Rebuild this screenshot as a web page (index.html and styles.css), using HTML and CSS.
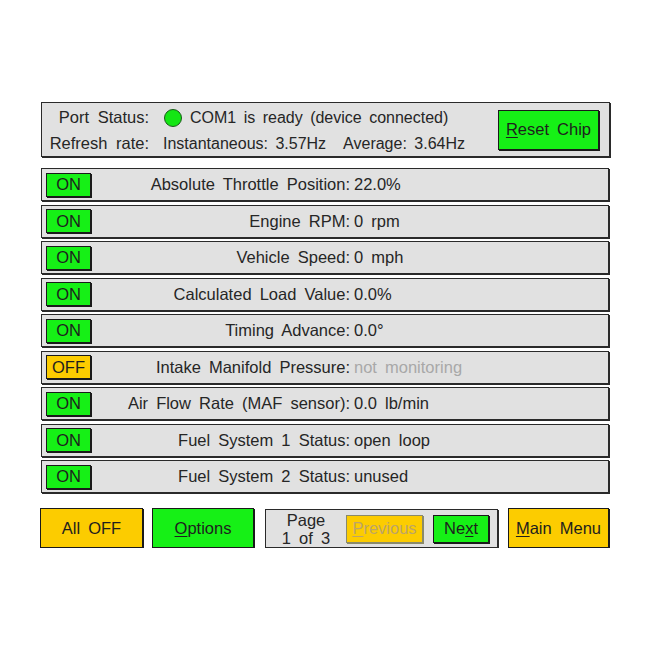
FILE: index.html
```html
<!DOCTYPE html>
<html>
<head>
<meta charset="utf-8">
<link rel="stylesheet" href="styles.css">
</head>
<body>
<div class="app">
  <div class="header panel">
    <div class="hinfo">
      <div class="hline">
        <span class="hlabel">Port Status:</span>
        <span class="led"></span>
        <span class="htext">COM1 is ready (device connected)</span>
      </div>
      <div class="hline">
        <span class="hlabel">Refresh rate:</span>
        <span class="htext inst">Instantaneous: 3.57Hz</span>
        <span class="htext avg">Average: 3.64Hz</span>
      </div>
    </div>
    <div class="btn green reset"><span class="u">R</span>eset Chip</div>
  </div>

  <div class="rows">
    <div class="row panel"><div class="tog green">ON</div><span class="label">Absolute Throttle Position:</span><span class="value">22.0%</span></div>
    <div class="row panel"><div class="tog green">ON</div><span class="label">Engine RPM:</span><span class="value">0 rpm</span></div>
    <div class="row panel"><div class="tog green">ON</div><span class="label">Vehicle Speed:</span><span class="value">0 mph</span></div>
    <div class="row panel"><div class="tog green">ON</div><span class="label">Calculated Load Value:</span><span class="value">0.0%</span></div>
    <div class="row panel"><div class="tog green">ON</div><span class="label">Timing Advance:</span><span class="value">0.0°</span></div>
    <div class="row panel"><div class="tog yellow">OFF</div><span class="label">Intake Manifold Pressure:</span><span class="value dim">not monitoring</span></div>
    <div class="row panel"><div class="tog green">ON</div><span class="label">Air Flow Rate (MAF sensor):</span><span class="value">0.0 lb/min</span></div>
    <div class="row panel"><div class="tog green">ON</div><span class="label">Fuel System 1 Status:</span><span class="value">open loop</span></div>
    <div class="row panel"><div class="tog green">ON</div><span class="label">Fuel System 2 Status:</span><span class="value">unused</span></div>
  </div>

  <div class="footer">
    <div class="btn yellow big alloff">All OFF</div>
    <div class="btn green big options"><span class="u">O</span>ptions</div>
    <div class="pager panel">
      <div class="pagetext">Page<br>1 of 3</div>
      <div class="btn yellow disabled prev"><span class="u">P</span>revious</div>
      <div class="btn green next">Ne<span class="u">x</span>t</div>
    </div>
    <div class="btn yellow big mainmenu"><span class="u">M</span>ain Menu</div>
  </div>
</div>
</body>
</html>
```

FILE: styles.css
```css
html, body {
  margin: 0;
  padding: 0;
  background: #ffffff;
}

body {
  font-family: "Liberation Sans", Arial, sans-serif;
  font-size: 16.5px;
  color: #262626;
  word-spacing: 3.5px;
}

.app {
  width: 570px;
  margin-left: 40px;
  padding-top: 102px;
  display: flex;
  flex-direction: column;
}

.panel {
  background: #e1e1e1;
  border: 1px solid #2a2a2a;
  box-shadow: 1px 1px 0 #2a2a2a;
  box-sizing: border-box;
}

.btn, .tog {
  box-sizing: border-box;
  border: 1px solid #1a1a1a;
  box-shadow: 1px 1px 0 #1a1a1a;
  display: flex;
  align-items: center;
  justify-content: center;
  color: #1e1e1e;
}

.green { background: #16f016; }
.yellow { background: #fccc00; }

.u { text-decoration: underline; text-underline-offset: 2px; }

/* header */
.header {
  height: 55px;
  margin-left: 1px;
  width: 569px;
  display: flex;
  align-items: center;
  padding-right: 10px;
}

.hinfo {
  flex: 1;
  display: flex;
  flex-direction: column;
  gap: 6px;
  padding-top: 2px;
  font-size: 16px;
  word-spacing: 3px;
}

.hline {
  display: flex;
  align-items: center;
  height: 20px;
}

.hlabel {
  width: 107px;
  text-align: right;
  font-size: 16.5px;
  word-spacing: 4px;
}

.led {
  width: 18px;
  height: 18px;
  border-radius: 50%;
  background: #14e614;
  border: 1px solid #1a5a1a;
  box-sizing: border-box;
  margin-left: 15px;
  margin-right: 8px;
}

.inst { margin-left: 14px; }
.avg { margin-left: 17px; }

.reset {
  width: 101px;
  height: 40px;
}

/* rows */
.rows {
  margin-top: 11px;
  margin-left: 1px;
  width: 568px;
  display: flex;
  flex-direction: column;
  gap: 3.5px;
}

.row {
  height: 33px;
  display: flex;
  align-items: center;
  padding-left: 4px;
}

.tog {
  width: 45px;
  height: 24px;
}

.label {
  width: 259px;
  text-align: right;
}

.value {
  margin-left: 4px;
}

.dim { color: #a8a8a8; }

/* footer */
.footer {
  margin-top: 15px;
  display: flex;
  align-items: stretch;
  height: 40px;
}

.big { height: 40px; }

.alloff { width: 103px; }
.options { width: 102px; margin-left: 9px; }
.pager {
  width: 233px;
  margin-left: 11px;
  display: flex;
  align-items: center;
  height: 39px;
  margin-top: 1px;
}
.pagetext {
  width: 80px;
  text-align: center;
  line-height: 18px;
  padding-top: 1px;
}
.prev {
  width: 77px;
  height: 28px;
  color: #bda468;
  border-color: #8a8a6a;
  box-shadow: 1px 1px 0 #8a8a6a;
}
.next {
  width: 56px;
  height: 28px;
  margin-left: 10px;
}
.mainmenu { width: 101px; margin-left: 10px; }
```
